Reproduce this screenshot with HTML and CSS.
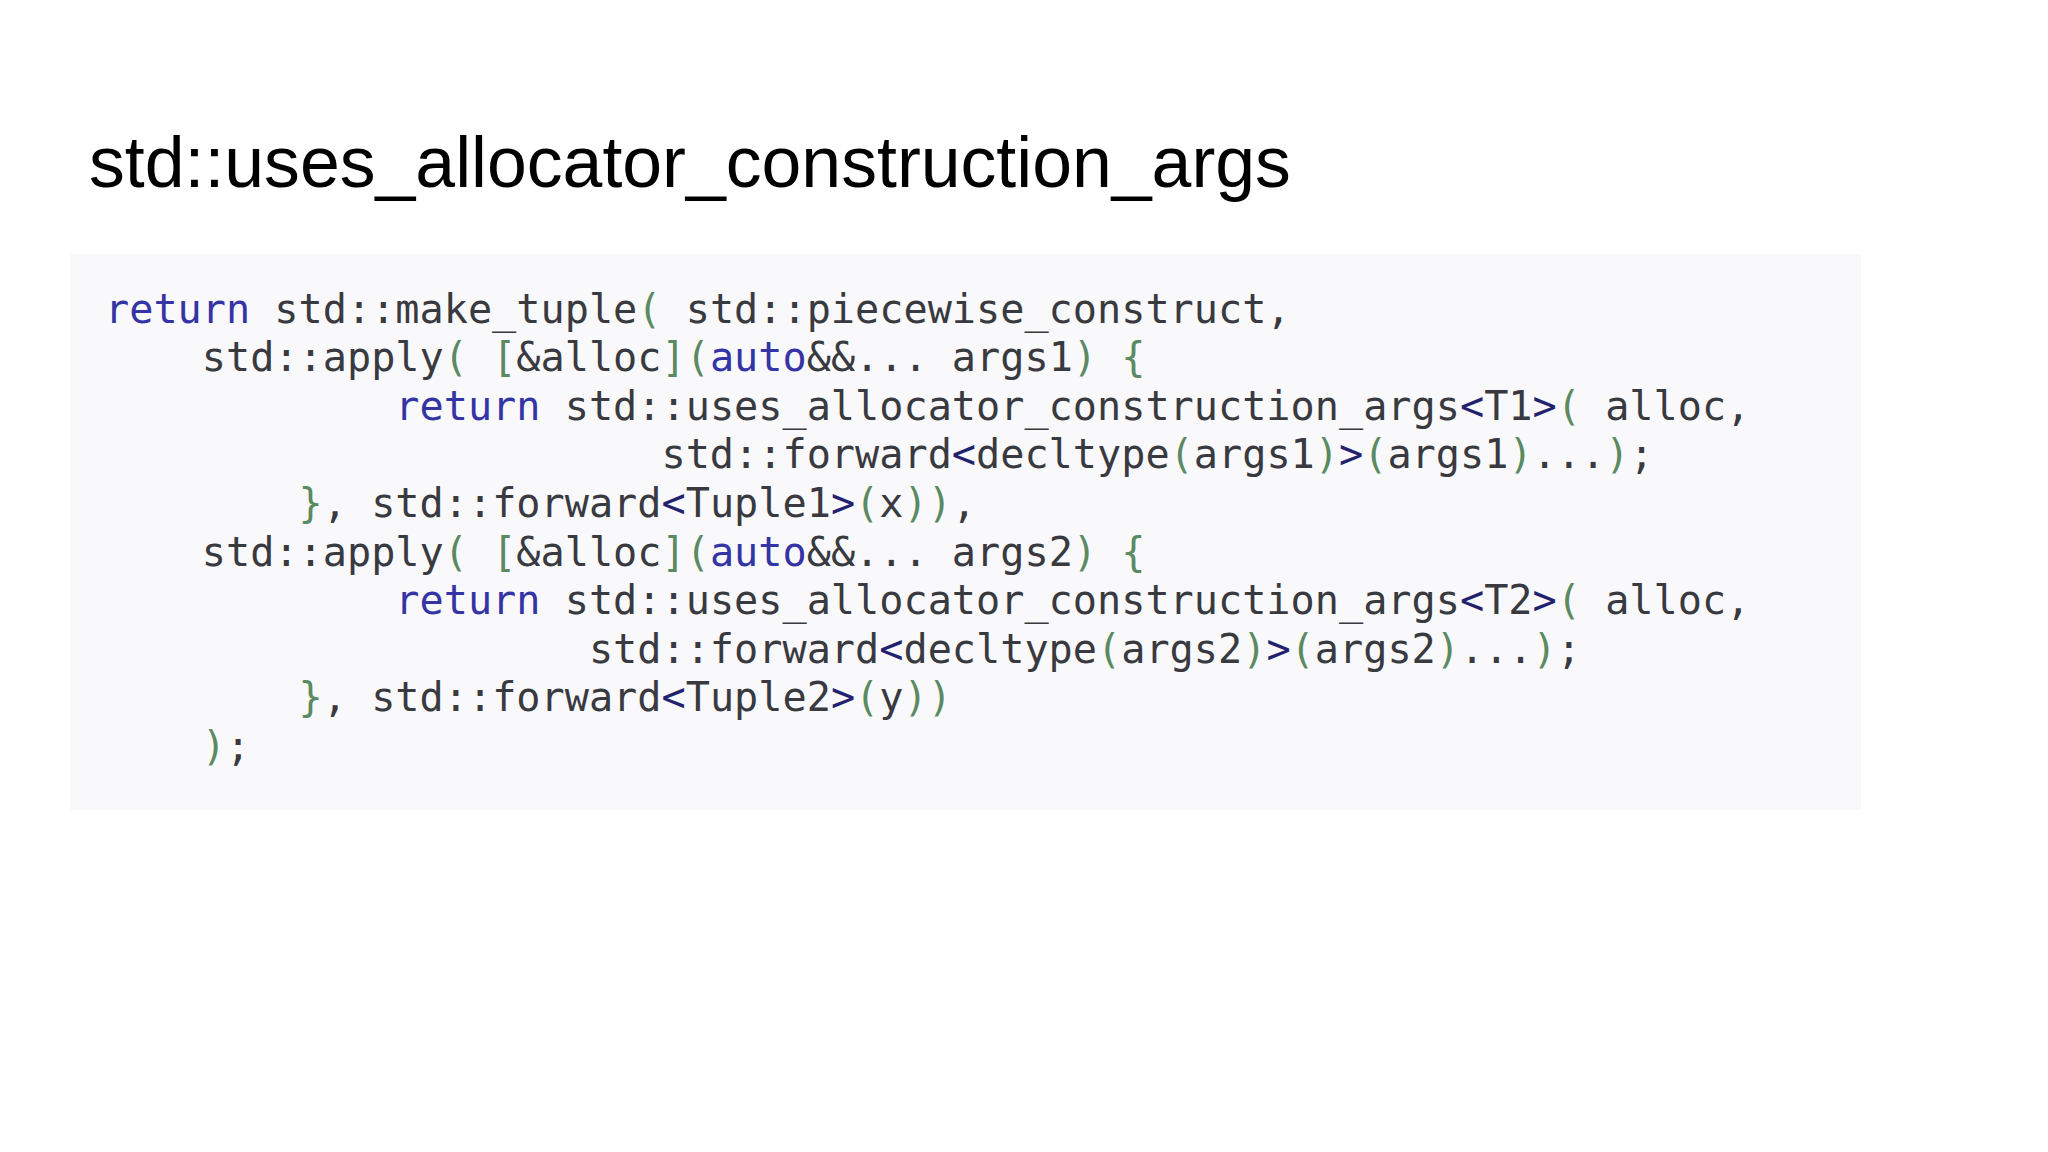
FILE: index.html
```html
<!DOCTYPE html>
<html>
<head>
<meta charset="utf-8">
<title>std::uses_allocator_construction_args</title>
<link rel="stylesheet" href="styles.css">
</head>
<body>
<main class="slide">
  <h1 class="title">std::uses_allocator_construction_args</h1>
  <div class="code-box">
<pre class="code"><span class="kw">return</span> std::make_tuple<span class="br">(</span> std::piecewise_construct,
    std::apply<span class="br">(</span> <span class="br">[</span>&amp;alloc<span class="br">]</span><span class="br">(</span><span class="kw">auto</span>&amp;&amp;... args1<span class="br">)</span> <span class="br">{</span>
            <span class="kw">return</span> std::uses_allocator_construction_args<span class="sy">&lt;</span>T1<span class="sy">&gt;</span><span class="br">(</span> alloc,
                       std::forward<span class="sy">&lt;</span>decltype<span class="br">(</span>args1<span class="br">)</span><span class="sy">&gt;</span><span class="br">(</span>args1<span class="br">)</span>...<span class="br">)</span>;
        <span class="br">}</span>, std::forward<span class="sy">&lt;</span>Tuple1<span class="sy">&gt;</span><span class="br">(</span>x<span class="br">)</span><span class="br">)</span>,
    std::apply<span class="br">(</span> <span class="br">[</span>&amp;alloc<span class="br">]</span><span class="br">(</span><span class="kw">auto</span>&amp;&amp;... args2<span class="br">)</span> <span class="br">{</span>
            <span class="kw">return</span> std::uses_allocator_construction_args<span class="sy">&lt;</span>T2<span class="sy">&gt;</span><span class="br">(</span> alloc,
                    std::forward<span class="sy">&lt;</span>decltype<span class="br">(</span>args2<span class="br">)</span><span class="sy">&gt;</span><span class="br">(</span>args2<span class="br">)</span>...<span class="br">)</span>;
        <span class="br">}</span>, std::forward<span class="sy">&lt;</span>Tuple2<span class="sy">&gt;</span><span class="br">(</span>y<span class="br">)</span><span class="br">)</span>
    <span class="br">)</span>;</pre>
  </div>
</main>
</body>
</html>
```
FILE: styles.css
```css
html, body {
  margin: 0;
  padding: 0;
  background: #ffffff;
}

.slide {
  width: 2048px;
  height: 1152px;
  box-sizing: border-box;
  padding-top: 127px;
  display: flex;
  flex-direction: column;
  align-items: flex-start;
}

.title {
  margin: 0 0 0 89px;
  font-family: "Liberation Sans", Arial, sans-serif;
  font-weight: normal;
  font-size: 71.6px;
  line-height: 71.6px;
  color: #000000;
}

.code-box {
  margin: 55px 0 0 70px;
  width: 1791px;
  height: 556px;
  box-sizing: border-box;
  padding: 31px 0 0 35px;
  background: #f9f8fb;
}

.code {
  margin: 0;
  font-family: "DejaVu Sans Mono", "Liberation Mono", monospace;
  font-size: 40.2px;
  line-height: 48.6px;
  color: #383a40;
  white-space: pre;
}

.kw {
  color: #3434a4;
}

.br {
  color: #5a8a62;
}

.sy {
  color: #22226e;
}
```
